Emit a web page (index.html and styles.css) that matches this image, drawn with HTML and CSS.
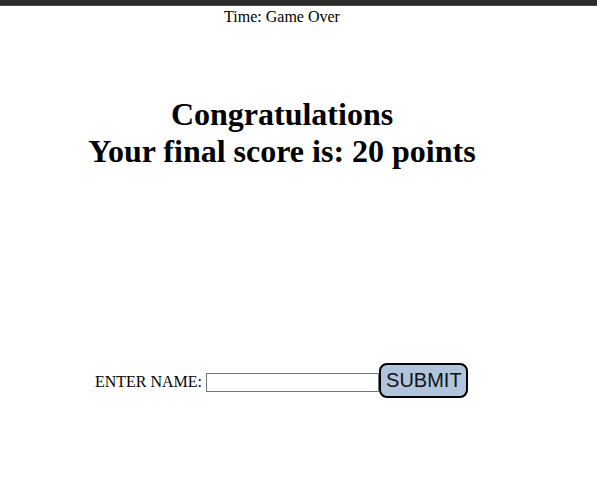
FILE: index.html
```html
<!DOCTYPE html>
<html>
<head>
<meta charset="utf-8">
<link rel="stylesheet" href="styles.css">
</head>
<body>
<div class="topbar"></div>
<div class="page">
  <div class="time">Time: Game Over</div>
  <h1 class="result">Congratulations<br>Your final score is: 20 points</h1>
  <form class="entry">
    <label class="entry-label" for="name">ENTER NAME:</label>
    <input class="entry-input" id="name" type="text">
    <button class="entry-submit" type="button">SUBMIT</button>
  </form>
</div>
</body>
</html>
```
FILE: styles.css
```css
html, body {
  margin: 0;
  padding: 0;
  background: #ffffff;
}
body {
  font-family: "Liberation Serif", "Times New Roman", serif;
  font-size: 16px;
  color: #000;
}
.topbar {
  height: 5px;
  background: #2b2b2b;
  border-bottom: 1px solid #4a4a4a;
}
.page {
  width: 564px;
  text-align: center;
}
.time {
  padding-top: 2px;
  line-height: 18px;
}
.result {
  margin: 70px 0 0;
  font-size: 32px;
  font-weight: bold;
  line-height: 37px;
}
.entry {
  margin: 193px 0 0;
  display: flex;
  justify-content: center;
  align-items: baseline;
  padding-right: 1px;
}
.entry-label {
  line-height: 18px;
  margin-right: 4px;
}
.entry-input {
  box-sizing: border-box;
  width: 173px;
  height: 19px;
  margin: 0;
  padding: 1px 2px;
  border: 1px solid #767676;
  border-radius: 0;
  font-family: "Liberation Sans", Arial, sans-serif;
  font-size: 13.33px;
}
.entry-submit {
  box-sizing: border-box;
  height: 35px;
  width: 89px;
  margin: 0;
  padding: 4px 5px;
  border: 2px solid #000;
  border-radius: 8px;
  background: #b0c4de;
  font-family: "Liberation Sans", Arial, sans-serif;
  font-size: 20px;
  line-height: 23px;
  color: #111;
}
```
